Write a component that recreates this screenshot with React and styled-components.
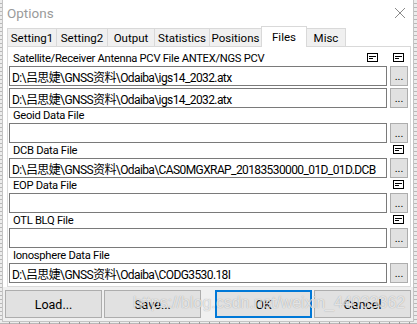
import React from 'react';
import styled, { createGlobalStyle } from 'styled-components';

const Global = createGlobalStyle`
  html, body { margin: 0; padding: 0; }
  body {
    width: 417px; height: 324px; overflow: hidden;
    font-family: Roboto, "Noto Sans CJK SC", sans-serif;
  }
`;

const Desktop = styled.div`
  width: 417px; height: 324px; box-sizing: border-box; padding-left: 2px;
  background:
    repeating-linear-gradient(90deg, transparent 0 9px, #9a9a9a 9px 10px),
    repeating-linear-gradient(0deg, #b8b8b8 0 1px, #ececec 1px 4px);
`;

const Window = styled.div`
  position: relative;
  width: 412px; height: 322px; box-sizing: border-box;
  border: 1px solid #c4c4c4; border-top: none;
  background: #ffffff;
  display: flex; flex-direction: column;
`;

const TitleBar = styled.div`
  height: 26px; flex: none;
  display: flex; align-items: center; justify-content: space-between;
  padding: 0 7px 0 4px;
  color: #9a9a9a; font-size: 13.5px;
`;

const TabStrip = styled.div`
  height: 21px; flex: none;
  display: flex; align-items: flex-end;
  padding-left: 4px; margin-bottom: -1px;
  position: relative; z-index: 1;
`;

const Tab = styled.div`
  box-sizing: border-box;
  width: ${p => p.$w}px;
  height: ${p => (p.$active ? 21 : 19)}px;
  margin-left: ${p => (p.$first ? 0 : -1)}px;
  display: flex; align-items: center; justify-content: center;
  padding-bottom: ${p => (p.$active ? 1 : 0)}px;
  border: 1px solid #d9d9d9;
  border-bottom: ${p => (p.$active ? 'none' : '1px solid #d9d9d9')};
  background: ${p => (p.$active ? '#ffffff' : '#f0f0f0')};
  position: relative; z-index: ${p => (p.$active ? 2 : 1)};
  font-size: 11.5px; color: #000; white-space: nowrap;
`;

const Panel = styled.div`
  margin: 0 2px 0 4px;
  border: 1px solid #d9d9d9;
  background: #fff;
  padding: 4px 2px 3px 1px;
  display: flex; flex-direction: column;
`;

const Group = styled.div`
  display: flex; flex-direction: column;
`;

const LabelRow = styled.div`
  height: 15px;
  display: flex; align-items: flex-start;
`;

const Label = styled.div`
  flex: 1;
  padding-left: 4px;
  font-size: 11.2px; letter-spacing: -0.28px; line-height: 15px; color: #000;
  white-space: nowrap;
`;

const Icons = styled.div`
  display: flex; gap: 15px;
  padding: 2px 4px 0 0;
`;

const Fields = styled.div`
  display: flex; flex-direction: column; gap: 2px;
`;

const FieldRow = styled.div`
  display: flex; gap: 3px; height: 20px;
`;

const PathInput = styled.input`
  flex: 1; min-width: 0;
  height: 20px; box-sizing: border-box;
  border: 1px solid #7a7a7a; background: #fff;
  padding: 0 2px; margin: 0; outline: none;
  font-family: Roboto, "Noto Sans CJK SC", sans-serif;
  font-size: 12px; letter-spacing: -0.6px; color: #000;
`;

const BrowseButton = styled.button`
  width: 18px; height: 20px; box-sizing: border-box; flex: none;
  border: 1px solid #adadad; background: #e1e1e1;
  padding: 0 0 4px; margin: 0;
  display: flex; align-items: flex-end; justify-content: center;
  font-family: Roboto, sans-serif; font-size: 11px; line-height: 8px; color: #000;
`;

const ButtonBar = styled.div`
  flex: 1;
  background: #f0f0f0;
  display: flex; align-items: flex-start;
  padding: 3px 0 0 1px;
`;

const DialogButton = styled.button`
  width: 97px; height: 28px; box-sizing: border-box;
  margin: 0 0 0 ${p => p.$gap}px; padding: 0;
  border: ${p => (p.$default ? '2px solid #0078d7' : '1px solid #adadad')};
  background: #e1e1e1;
  font-family: Roboto, sans-serif; font-size: 12.5px; color: #000;
`;

const Watermark = styled.div`
  position: absolute; left: 130px; top: 294px;
  font-family: "Liberation Sans", Arial, sans-serif;
  font-size: 16px;
  color: rgba(255, 255, 255, 0.72);
  text-shadow: 0 0 1px rgba(0, 0, 0, 0.35);
  pointer-events: none; white-space: nowrap;
`;

const NoteIcon = () => (
  <svg width="11" height="9" viewBox="0 0 11 9">
    <rect x="0.5" y="0.5" width="10" height="8" fill="#fff" stroke="#000" strokeWidth="1" />
    <line x1="2" y1="3.5" x2="9" y2="3.5" stroke="#000" strokeWidth="1" />
    <line x1="2" y1="5.5" x2="6" y2="5.5" stroke="#000" strokeWidth="1" />
  </svg>
);

const CloseIcon = () => (
  <svg width="12" height="12" viewBox="0 0 12 12">
    <path d="M1 1 L11 11 M11 1 L1 11" stroke="#8a8a8a" strokeWidth="1" fill="none" />
  </svg>
);

const tabs = [
  ['Setting1', 50], ['Setting2', 52], ['Output', 48], ['Statistics', 56],
  ['Positions', 53], ['Files', 46], ['Misc', 40],
];

const groups = [
  {
    label: 'Satellite/Receiver Antenna PCV File ANTEX/NGS PCV', icons: 2,
    values: ['D:\\吕思婕\\GNSS资料\\Odaiba\\igs14_2032.atx', 'D:\\吕思婕\\GNSS资料\\Odaiba\\igs14_2032.atx'],
  },
  { label: 'Geoid Data File', icons: 0, values: [''] },
  { label: 'DCB Data File', icons: 1, values: ['D:\\吕思婕\\GNSS资料\\Odaiba\\CAS0MGXRAP_20183530000_01D_01D.DCB'] },
  { label: 'EOP Data File', icons: 1, values: [''] },
  { label: 'OTL BLQ File', icons: 1, values: [''] },
  { label: 'Ionosphere Data File', icons: 0, values: ['D:\\吕思婕\\GNSS资料\\Odaiba\\CODG3530.18I'] },
];

export default function App() {
  return (
    <>
      <Global />
      <Desktop>
        <Window>
          <TitleBar>
            <span>Options</span>
            <CloseIcon />
          </TitleBar>
          <TabStrip>
            {tabs.map(([name, w], i) => (
              <Tab key={name} $w={w} $first={i === 0} $active={name === 'Files'}>{name}</Tab>
            ))}
          </TabStrip>
          <Panel>
            {groups.map(g => (
              <Group key={g.label}>
                <LabelRow>
                  <Label>{g.label}</Label>
                  {g.icons > 0 && (
                    <Icons>
                      {Array.from({ length: g.icons }).map((_, i) => <NoteIcon key={i} />)}
                    </Icons>
                  )}
                </LabelRow>
                <Fields>
                  {g.values.map((v, i) => (
                    <FieldRow key={i}>
                      <PathInput readOnly value={v} />
                      <BrowseButton>...</BrowseButton>
                    </FieldRow>
                  ))}
                </Fields>
              </Group>
            ))}
          </Panel>
          <ButtonBar>
            <DialogButton $gap={1}>Load...</DialogButton>
            <DialogButton $gap={2}>Save...</DialogButton>
            <DialogButton $gap={14} $default>OK</DialogButton>
            <DialogButton $gap={2}>Cancel</DialogButton>
          </ButtonBar>
          <Watermark>https://blog.csdn.net/weixin_44033362</Watermark>
        </Window>
      </Desktop>
    </>
  );
}
